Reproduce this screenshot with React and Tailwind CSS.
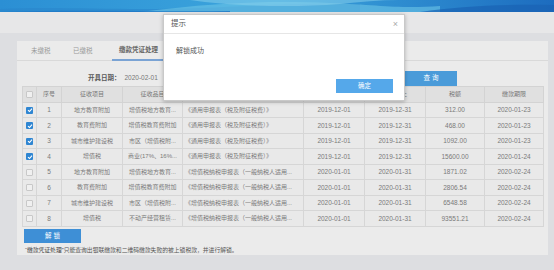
import React from "react";

const rows = [
  ["1", "地方教育附加", "增值税地方教育...", "《通用申报表（税及附征税费）》", "2019-12-01", "2019-12-31", "312.00", "2020-01-23", true],
  ["2", "教育费附加", "增值税教育费附加", "《通用申报表（税及附征税费）》", "2019-12-01", "2019-12-31", "468.00", "2020-01-23", true],
  ["3", "城市维护建设税", "市区（增值税附...", "《通用申报表（税及附征税费）》", "2019-12-01", "2019-12-31", "1092.00", "2020-01-23", true],
  ["4", "增值税", "商业(17%、16%...", "《通用申报表（税及附征税费）》", "2019-12-01", "2019-12-31", "15600.00", "2020-01-24", true],
  ["5", "地方教育附加", "增值税地方教育...", "《增值税纳税申报表（一般纳税人适用...", "2020-01-01", "2020-01-31", "1871.02", "2020-02-24", false],
  ["6", "教育费附加", "增值税教育费附加", "《增值税纳税申报表（一般纳税人适用...", "2020-01-01", "2020-01-31", "2806.54", "2020-02-24", false],
  ["7", "城市维护建设税", "市区（增值税附...", "《增值税纳税申报表（一般纳税人适用...", "2020-01-01", "2020-01-31", "6548.58", "2020-02-24", false],
  ["8", "增值税", "不动产经营租赁...", "《增值税纳税申报表（一般纳税人适用...", "2020-01-01", "2020-01-31", "93551.21", "2020-02-24", false],
];

const widths = ["w-[15px]", "w-[25px]", "w-[61px]", "w-[60px]", "w-[121px]", "w-[61px]", "w-[61px]", "w-[59px]", "w-[59px]"];

function Box({ checked }) {
  if (checked) {
    return (
      <span className="inline-flex w-[7px] h-[7px] rounded-[1px] bg-[#2f86d2] items-center justify-center">
        <svg width="6" height="6" viewBox="0 0 6 6">
          <path d="M1 3.1 L2.5 4.5 L5 1.6" stroke="#fff" strokeWidth="1.1" fill="none" />
        </svg>
      </span>
    );
  }
  return <span className="inline-block w-[7px] h-[7px] rounded-[1px] border border-[#c8c8c8] bg-[#f0f0f0]" />;
}

export default function App() {
  const font = { fontFamily: '"Liberation Sans", "Noto Sans CJK SC", sans-serif' };
  return (
    <div className="relative w-[554px] h-[270px] overflow-hidden bg-[#dddee1]" style={font}>
      {/* banner */}
      <div className="h-[12px] w-full bg-gradient-to-r from-[#2b8fd4] via-[#3da6dd] to-[#1d6cbf]">
        <svg width="554" height="12" viewBox="0 0 554 12" preserveAspectRatio="none">
          <path d="M0 9 C60 6 120 11 200 8 C260 6 300 2 360 4 L360 12 L0 12 Z" fill="#2a86cc" opacity="0.6" />
          <path d="M140 12 C200 4 260 0 330 3 C380 5 400 9 440 6 L440 12 Z" fill="#6cc4e6" opacity="0.6" />
          <path d="M190 0 C230 6 290 8 340 4 C360 2 380 0 400 0 Z" fill="#8ed4ee" opacity="0.5" />
          <path d="M420 12 C460 6 500 4 554 5 L554 12 Z" fill="#1a62b4" opacity="0.7" />
          <path d="M0 12 C80 9 150 12 230 11 L230 12 Z" fill="#1f78c6" opacity="0.8" />
        </svg>
      </div>
      <div className="h-[21px] bg-[#e7e7e8]" />
      <div className="pt-[8px] pl-[17px]">
        <div className="w-[531px] h-[214px] bg-[#ebebeb] flex flex-col">
          {/* tabs */}
          <div className="h-[21px] flex items-stretch border-b border-[#d9d9d9] pl-[14px] text-[6.5px] text-[#999]">
            <div className="w-[42px] flex items-center">未缴税</div>
            <div className="w-[39px] flex items-center">已缴税</div>
            <div className="flex items-center px-[7px] text-[#666] font-bold border-b-2 border-[#7aa3d4] mb-[-1px]">缴款凭证处理</div>
          </div>
          {/* date row */}
          <div className="h-[25px] flex items-center pt-[9px] text-[6.5px]">
            <div className="ml-[71px] font-bold text-[#5a5a5a]">开具日期：</div>
            <div className="ml-[4px] text-[#777]">2020-02-01</div>
            <div className="ml-auto mr-[91px] w-[52px] h-[15px] bg-[#4a9bd9] text-white flex items-center justify-center text-[6.5px]">查 询</div>
          </div>
          {/* table */}
          <div className="mx-[5px] w-[522px] border-t border-[#d3d3d3]">
            <div className="flex h-[16px] bg-[#e0e0e0] border-b border-[#d3d3d3] text-[6px] text-[#777]">
              {["", "序号", "征收项目", "征收品目", "申报表", "所属期起", "所属期止", "税额", "缴款期限"].map((h, i) => (
                <div key={i} className={`${widths[i]} shrink-0 flex items-center justify-center border-r border-[#d3d3d3] ${i === 0 ? "border-l" : ""}`}>
                  {i === 0 ? <Box checked={false} /> : h}
                </div>
              ))}
            </div>
            {rows.map((r, ri) => (
              <div key={ri} className="flex h-[15.5px] bg-[#e9e9e9] border-b border-[#d6d6d6] text-[#7a7a7a]">
                <div className={`${widths[0]} shrink-0 flex items-center justify-center border-l border-r border-[#d6d6d6]`}>
                  <Box checked={r[8]} />
                </div>
                {r.slice(0, 8).map((c, ci) => {
                  const i = ci + 1;
                  const numeric = i === 1 || i >= 5;
                  return (
                    <div
                      key={ci}
                      className={`${widths[i]} shrink-0 flex items-center overflow-hidden whitespace-nowrap border-r border-[#d6d6d6] ${numeric ? "text-[6.5px]" : "text-[6px]"} ${i === 4 ? "justify-start pl-[2px]" : "justify-center"}`}
                    >
                      {c}
                    </div>
                  );
                })}
              </div>
            ))}
          </div>
          <div className="ml-[7px] mt-[2px] w-[57px] h-[15px] bg-[#3e8fd6] text-white text-[6.5px] flex items-center justify-center">解 锁</div>
          <div className="ml-[8px] mt-[3px] text-[5.8px] text-[#555] whitespace-nowrap">
            <span className="text-[#444]">“缴款凭证处理”</span>只能查询出银联缴款和二维码缴款失败的被上锁税款，并进行解锁。
          </div>
        </div>
      </div>

      {/* dialog */}
      <div className="absolute left-[163px] top-[14px] w-[242px] h-[87px] bg-white border border-[#c9c9c9] shadow-[0_1px_4px_rgba(0,0,0,0.25)] flex flex-col">
        <div className="h-[19px] border-b border-[#e6e6e6] flex items-center justify-between pl-[7px] pr-[6px]">
          <span className="text-[7.5px] text-[#555]">提示</span>
          <span className="text-[9px] text-[#aaa] leading-none">×</span>
        </div>
        <div className="pl-[12px] pt-[12px] text-[7px] text-[#555]">解锁成功</div>
        <div className="mt-auto mb-[7px] mr-[11px] self-end w-[57px] h-[14px] bg-[#55a8ea] text-white text-[6.5px] flex items-center justify-center">确定</div>
      </div>
    </div>
  );
}
